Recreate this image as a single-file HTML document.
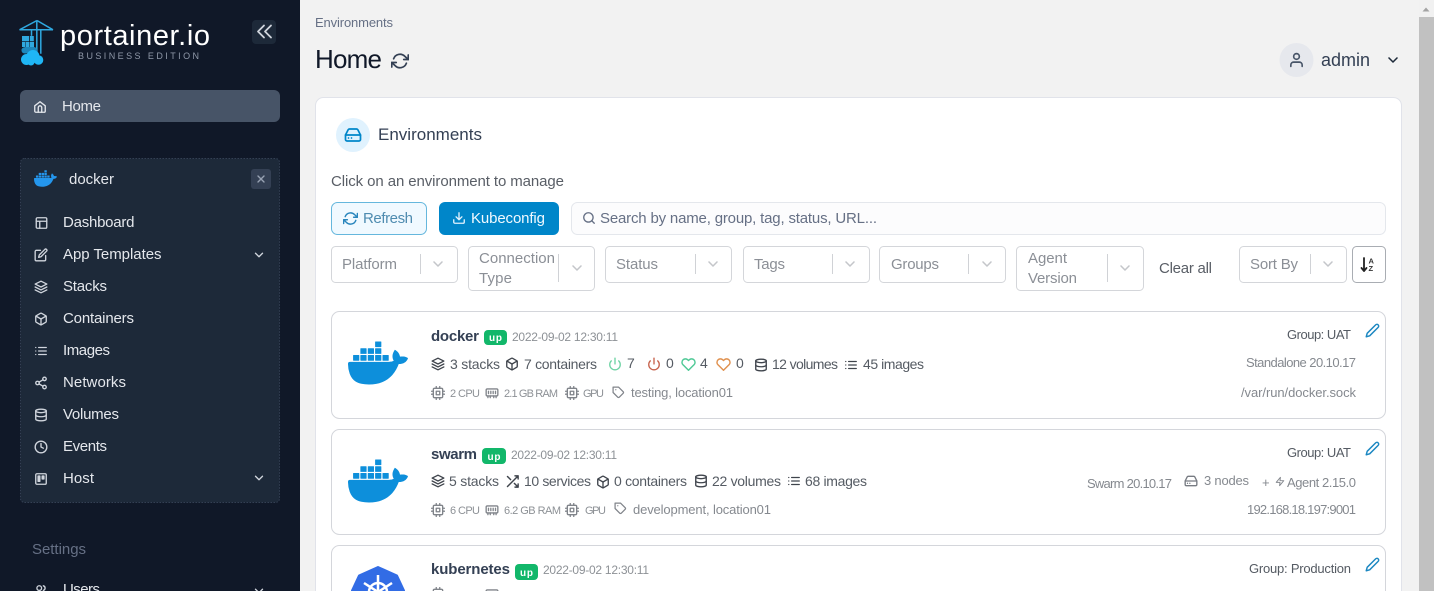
<!DOCTYPE html>
<html lang="en">
<head>
<meta charset="utf-8">
<title>Portainer Home</title>
<style>
html,body{margin:0;padding:0;width:1434px;height:591px;overflow:hidden;background:#f2f2f2}
svg{display:block}
text{font-family:"Liberation Sans",Arial,sans-serif;white-space:pre}
.ic{fill:none;stroke:currentColor;stroke-width:2.3;stroke-linecap:round;stroke-linejoin:round}
.nav{fill:#e4e7ec;font-size:15px}
.f{fill:#8b8f96;font-size:15px}
.s{fill:#555b63;font-size:14px}
.d{fill:#8d9196;font-size:12px}
.x{fill:#8d9196;font-size:11px}
.g{fill:#85898f;font-size:13px}
.b{fill:#344054;font-size:15px;font-weight:bold}
.u{fill:#fff;font-size:10px;font-weight:bold}
</style>
</head>
<body>
<svg xmlns="http://www.w3.org/2000/svg" width="1434" height="591" viewBox="0 0 1434 591">
<defs>
<symbol id="home" viewBox="0 0 24 24"><g class="ic"><path d="M3 10l9-7 9 7v9a2 2 0 0 1-2 2H5a2 2 0 0 1-2-2z"/><path d="M9 21v-8a3 3 0 0 1 6 0v8"/></g></symbol>
<symbol id="layout" viewBox="0 0 24 24"><g class="ic"><rect x="3" y="3" width="18" height="18" rx="2"/><path d="M3 9h18M9 21V9"/></g></symbol>
<symbol id="edit" viewBox="0 0 24 24"><g class="ic"><path d="M11 4H4a2 2 0 0 0-2 2v14a2 2 0 0 0 2 2h14a2 2 0 0 0 2-2v-7"/><path d="M18.5 2.5a2.121 2.121 0 0 1 3 3L12 15l-4 1 1-4 9.500-9.500z"/></g></symbol>
<symbol id="layers" viewBox="0 0 24 24"><g class="ic"><path d="M12 2 2 7l10 5 10-5-10-5z"/><path d="M2 17l10 5 10-5"/><path d="M2 12l10 5 10-5"/></g></symbol>
<symbol id="box" viewBox="0 0 24 24"><g class="ic"><path d="M21 16V8a2 2 0 0 0-1-1.730l-7-4a2 2 0 0 0-2 0l-7 4A2 2 0 0 0 3 8v8a2 2 0 0 0 1 1.730l7 4a2 2 0 0 0 2 0l7-4A2 2 0 0 0 21 16z"/><path d="M3.270 6.960 12 12.010l8.730-5.050"/><path d="M12 22.080V12"/></g></symbol>
<symbol id="list" viewBox="0 0 24 24"><g class="ic"><path d="M8 6h13M8 12h13M8 18h13M3 6h.01M3 12h.01M3 18h.01"/></g></symbol>
<symbol id="share" viewBox="0 0 24 24"><g class="ic"><circle cx="18" cy="5" r="3"/><circle cx="6" cy="12" r="3"/><circle cx="18" cy="19" r="3"/><path d="M8.590 13.510l6.830 3.980M15.410 6.510l-6.820 3.980"/></g></symbol>
<symbol id="db" viewBox="0 0 24 24"><g class="ic"><ellipse cx="12" cy="5" rx="9" ry="3"/><path d="M21 12c0 1.660-4 3-9 3s-9-1.340-9-3"/><path d="M3 5v14c0 1.660 4 3 9 3s9-1.340 9-3V5"/></g></symbol>
<symbol id="clock" viewBox="0 0 24 24"><g class="ic"><circle cx="12" cy="12" r="10"/><path d="M12 6v6l4 2"/></g></symbol>
<symbol id="trello" viewBox="0 0 24 24"><g class="ic"><rect x="3" y="3" width="18" height="18" rx="2"/><rect x="7" y="7" width="3" height="9" fill="currentColor"/><rect x="14" y="7" width="3" height="5" fill="currentColor"/></g></symbol>
<symbol id="users" viewBox="0 0 24 24"><g class="ic"><path d="M17 21v-2a4 4 0 0 0-4-4H5a4 4 0 0 0-4 4v2"/><circle cx="9" cy="7" r="4"/><path d="M16 3.130a4 4 0 0 1 0 7.750"/></g></symbol>
<symbol id="chev" viewBox="0 0 24 24"><g class="ic"><path d="M6 9l6 6 6-6"/></g></symbol>
<symbol id="refresh" viewBox="0 0 24 24"><g class="ic"><path d="M23 4v6h-6M1 20v-6h6"/><path d="M3.510 9a9 9 0 0 1 14.850-3.360L23 10M1 14l4.640 4.360A9 9 0 0 0 20.490 15"/></g></symbol>
<symbol id="dl" viewBox="0 0 24 24"><g class="ic"><path d="M21 15v4a2 2 0 0 1-2 2H5a2 2 0 0 1-2-2v-4"/><path d="M7 10l5 5 5-5M12 15V3"/></g></symbol>
<symbol id="search" viewBox="0 0 24 24"><g class="ic"><circle cx="11" cy="11" r="8"/><path d="M21 21l-4.350-4.350"/></g></symbol>
<symbol id="user" viewBox="0 0 24 24"><g class="ic"><path d="M20 21v-2a4 4 0 0 0-4-4H8a4 4 0 0 0-4 4v2"/><circle cx="12" cy="7" r="4"/></g></symbol>
<symbol id="hdd" viewBox="0 0 24 24"><g class="ic"><path d="M22 12H2"/><path d="M5.450 5.110 2 12v6a2 2 0 0 0 2 2h16a2 2 0 0 0 2-2v-6l-3.450-6.890A2 2 0 0 0 16.760 4H7.240a2 2 0 0 0-1.790 1.110z"/><path d="M6 16h.01M10 16h.01"/></g></symbol>
<symbol id="power" viewBox="0 0 24 24"><g class="ic"><path d="M18.360 6.640a9 9 0 1 1-12.730 0"/><path d="M12 2v10"/></g></symbol>
<symbol id="heart" viewBox="0 0 24 24"><g class="ic"><path d="M20.840 4.610a5.500 5.500 0 0 0-7.780 0L12 5.670l-1.060-1.060a5.500 5.500 0 0 0-7.780 7.780l1.060 1.060L12 21.230l7.780-7.780 1.060-1.060a5.500 5.500 0 0 0 0-7.780z"/></g></symbol>
<symbol id="cpu" viewBox="0 0 24 24"><g class="ic"><rect x="4" y="4" width="16" height="16" rx="2"/><rect x="9" y="9" width="6" height="6"/><path d="M9 1v3M15 1v3M9 20v3M15 20v3M20 9h3M20 14h3M1 9h3M1 14h3"/></g></symbol>
<symbol id="ram" viewBox="0 0 24 24"><g class="ic"><rect x="2" y="5" width="20" height="12" rx="2"/><path d="M6 9v4M10 9v4M14 9v4M18 9v4M5 17v3M9 17v3M15 17v3M19 17v3"/></g></symbol>
<symbol id="tag" viewBox="0 0 24 24"><g class="ic"><path d="M20.590 13.410l-7.170 7.170a2 2 0 0 1-2.830 0L2 12V2h10l8.590 8.590a2 2 0 0 1 0 2.820z"/><path d="M7 7h.01"/></g></symbol>
<symbol id="pencil" viewBox="0 0 24 24"><g class="ic"><path d="M17 3a2.830 2.830 0 1 1 4 4L7.500 20.500 2 22l1.500-5.500L17 3z"/></g></symbol>
<symbol id="shuffle" viewBox="0 0 24 24"><g class="ic"><path d="M16 3h5v5M4 20 21 3M21 16v5h-5M15 15l6 6M4 4l5 5"/></g></symbol>
<symbol id="zap" viewBox="0 0 24 24"><g class="ic"><path d="M13 2 3 14h9l-1 8 10-12h-9l1-8z"/></g></symbol>
<symbol id="whale" viewBox="0 0 24 24"><path fill="currentColor" d="M13.983 11.078h2.119a.186.186 0 00.186-.185V9.006a.186.186 0 00-.186-.186h-2.119a.185.185 0 00-.185.185v1.888c0 .102.083.185.185.185m-2.954-5.43h2.118a.186.186 0 00.186-.186V3.574a.186.186 0 00-.186-.185h-2.118a.185.185 0 00-.185.185v1.888c0 .102.082.185.185.186m0 2.716h2.118a.187.187 0 00.186-.186V6.29a.186.186 0 00-.186-.185h-2.118a.185.185 0 00-.185.185v1.887c0 .102.082.185.185.186m-2.93 0h2.12a.186.186 0 00.184-.186V6.29a.185.185 0 00-.185-.185H8.1a.185.185 0 00-.185.185v1.887c0 .102.083.185.185.186m-2.964 0h2.119a.186.186 0 00.185-.186V6.29a.185.185 0 00-.185-.185H5.136a.186.186 0 00-.186.185v1.887c0 .102.084.185.186.186m5.893 2.715h2.118a.186.186 0 00.186-.185V9.006a.186.186 0 00-.186-.186h-2.118a.185.185 0 00-.185.185v1.888c0 .102.082.185.185.185m-2.93 0h2.12a.185.185 0 00.184-.185V9.006a.185.185 0 00-.184-.186h-2.12a.185.185 0 00-.184.185v1.888c0 .102.083.185.185.185m-2.964 0h2.119a.185.185 0 00.185-.185V9.006a.185.185 0 00-.184-.186h-2.12a.186.186 0 00-.186.186v1.887c0 .102.084.185.186.185m-2.92 0h2.12a.185.185 0 00.184-.185V9.006a.185.185 0 00-.184-.186h-2.12a.185.185 0 00-.184.185v1.888c0 .102.082.185.185.185M23.763 9.89c-.065-.051-.672-.51-1.954-.51-.338.001-.676.03-1.01.087-.248-1.7-1.653-2.53-1.716-2.566l-.344-.199-.226.327c-.284.438-.49.922-.612 1.43-.23.97-.09 1.882.403 2.661-.595.332-1.55.413-1.744.42H.751a.751.751 0 00-.75.748 11.376 11.376 0 00.692 4.062c.545 1.428 1.355 2.48 2.41 3.124 1.18.723 3.1 1.137 5.275 1.137.983.003 1.963-.086 2.93-.266a12.248 12.248 0 003.823-1.389c.98-.567 1.86-1.288 2.61-2.136 1.252-1.418 1.998-2.997 2.553-4.4h.221c1.372 0 2.215-.549 2.68-1.009.309-.293.55-.65.707-1.046l.098-.288Z"/></symbol>
</defs>

<!-- page -->
<rect width="1434" height="591" fill="#f2f2f2"/>

<!-- sidebar -->
<rect width="300" height="591" fill="#101828"/>
<g fill="none" stroke="#2fa8e0" stroke-width="1.500">
<path d="M19.500 29.800h33.500M37 20.500 19.500 29.800M37 20.500l16 9.300"/>
<path d="M36.800 20.500v33M40.800 29.800v24"/>
<path d="M31.500 29.800v6"/>
</g>
<g fill="#2fa8e0">
<rect x="22" y="36" width="7" height="5.300"/><rect x="29.800" y="36" width="4" height="5.300"/>
<rect x="22" y="42" width="3.500" height="5"/><rect x="26" y="42" width="3.500" height="5"/><rect x="30" y="42" width="4" height="5"/>
</g>
<path d="M21.500 50c0-2 2.500-3 5-3h7c4 0 5 5 1.500 6.500h-10c-2.500 0-3.500-1.500-3.500-3.500z" fill="#1d87bd"/>
<g fill="#1fb6f5">
<circle cx="26.500" cy="59.500" r="5.500"/><circle cx="33" cy="56.500" r="6.500"/><circle cx="38.500" cy="60" r="4.800"/><circle cx="31" cy="62" r="3.500"/>
</g>
<text x="60" y="45" font-size="29" fill="#ffffff" textLength="150">portainer.io</text>
<text x="78" y="59" font-size="9" fill="#8f98a8" textLength="121">BUSINESS EDITION</text>
<rect x="252" y="20" width="24" height="24" rx="4" fill="#1d2939"/>
<path d="M264 26l-6 6 6 6M271 26l-6 6 6 6" fill="none" stroke="#d0d5dd" stroke-width="1.800" stroke-linecap="round" stroke-linejoin="round" transform="translate(0 -.500)"/>

<rect x="20" y="90" width="260" height="32" rx="6" fill="#475467"/>
<use href="#home" x="33" y="100" width="14" height="14" color="#e4e7ec"/>
<text x="62" y="111" class="nav" textLength="39">Home</text>

<rect x="20.500" y="158.500" width="259" height="344" rx="4" fill="#1d2939" stroke="#344054" stroke-dasharray="1.500 1.500"/>
<use href="#whale" x="34" y="167" width="23" height="23" color="#2496ed"/>
<text x="69" y="184" class="nav" textLength="45">docker</text>
<rect x="251" y="169" width="20" height="20" rx="3" fill="#344054"/>
<path d="M258 176l6 6M264 176l-6 6" stroke="#98a2b3" stroke-width="1.400" stroke-linecap="round"/>

<g color="#d0d5dd">
<use href="#layout" x="34.500" y="216" width="14" height="14"/>
<use href="#edit" x="34" y="248" width="14" height="14"/>
<use href="#layers" x="34" y="280" width="14" height="14"/>
<use href="#box" x="34" y="312" width="14" height="14"/>
<use href="#list" x="34" y="344" width="14" height="14"/>
<use href="#share" x="34" y="376" width="14" height="14"/>
<use href="#db" x="34" y="408" width="14" height="14"/>
<use href="#clock" x="34" y="440" width="14" height="14"/>
<use href="#trello" x="34" y="472" width="14" height="14"/>
<use href="#users" x="34" y="584" width="14" height="14"/>
<use href="#chev" x="252" y="248" width="14" height="14"/>
<use href="#chev" x="252" y="471" width="14" height="14"/>
<use href="#chev" x="252" y="584" width="14" height="14"/>
</g>
<text x="63" y="227" class="nav" textLength="71.500">Dashboard</text>
<text x="63" y="259" class="nav" textLength="98.500">App Templates</text>
<text x="63" y="291" class="nav" textLength="44">Stacks</text>
<text x="63" y="323" class="nav" textLength="71">Containers</text>
<text x="63" y="355" class="nav" textLength="47">Images</text>
<text x="63" y="387" class="nav" textLength="63">Networks</text>
<text x="63" y="419" class="nav" textLength="56">Volumes</text>
<text x="63" y="451" class="nav" textLength="44">Events</text>
<text x="63" y="483" class="nav" textLength="31">Host</text>
<text x="32" y="554" font-size="15" fill="#667085" textLength="54">Settings</text>
<text x="63" y="594" class="nav" textLength="37">Users</text>

<!-- header -->
<text x="315" y="27" font-size="13" fill="#667085" textLength="78">Environments</text>
<text x="315" y="68" font-size="26" fill="#101828" textLength="67">Home</text>
<use href="#refresh" x="391" y="52" width="18" height="18" color="#344054"/>
<circle cx="1296.500" cy="60" r="17" fill="#e6e8ed"/>
<use href="#user" x="1288" y="51.500" width="17" height="17" color="#475467"/>
<text x="1321" y="66" font-size="18" fill="#344054" textLength="49">admin</text>
<use href="#chev" x="1385" y="52" width="16" height="16" color="#1d2939"/>

<!-- panel -->
<rect x="315.500" y="97.500" width="1086" height="560" rx="8" fill="#fff" stroke="#e1e3ea"/>
<circle cx="353" cy="135" r="17" fill="#e0f2fe"/>
<use href="#hdd" x="344" y="126" width="18" height="18" color="#0086c9"/>
<text x="378" y="140" font-size="17" fill="#344054" textLength="104">Environments</text>
<text x="331" y="186" font-size="15" fill="#595e66" textLength="233">Click on an environment to manage</text>

<rect x="331.500" y="202.500" width="95" height="32" rx="6" fill="#f0f9ff" stroke="#65b7dd"/>
<use href="#refresh" x="343" y="211" width="15" height="15" color="#2a86bd"/>
<text x="363" y="223" font-size="15" fill="#4f8cb0" textLength="50">Refresh</text>
<rect x="439" y="202" width="120" height="33" rx="6" fill="#0086c9"/>
<use href="#dl" x="452" y="211" width="14" height="14" color="#e0f2fe"/>
<text x="471" y="223" font-size="15" fill="#f0f9ff" textLength="74">Kubeconfig</text>
<rect x="571.500" y="202.500" width="814" height="32" rx="6" fill="#fcfcfd" stroke="#e4e7ec"/>
<use href="#search" x="582" y="211" width="14" height="14" color="#667085"/>
<text x="600" y="223" font-size="15" fill="#667085" textLength="277">Search by name, group, tag, status, URL...</text>

<!-- filters -->
<g fill="#fff" stroke="#d4d6da">
<rect x="331.500" y="246.500" width="126" height="36" rx="4"/>
<rect x="468.500" y="246.500" width="126" height="44" rx="4"/>
<rect x="605.500" y="246.500" width="126" height="36" rx="4"/>
<rect x="743.500" y="246.500" width="126" height="36" rx="4"/>
<rect x="879.500" y="246.500" width="126" height="36" rx="4"/>
<rect x="1016.500" y="246.500" width="127" height="44" rx="4"/>
<rect x="1239.500" y="246.500" width="107" height="36" rx="4"/>
</g>
<rect x="1352.500" y="246.500" width="33" height="36" rx="4" fill="#fff" stroke="#a9adb3"/>
<g stroke="#d0d2d6">
<path d="M420.500 254v20M558.500 254v28M695.500 254v20M832.500 254v20M968.500 254v20M1107.500 254v28M1310.500 254v20"/>
</g>
<g color="#c4c6ca">
<use href="#chev" x="430" y="256" width="16" height="16"/>
<use href="#chev" x="569" y="260" width="16" height="16"/>
<use href="#chev" x="705" y="256" width="16" height="16"/>
<use href="#chev" x="842" y="256" width="16" height="16"/>
<use href="#chev" x="979" y="256" width="16" height="16"/>
<use href="#chev" x="1117" y="260" width="16" height="16"/>
<use href="#chev" x="1320" y="256" width="16" height="16"/>
</g>
<text x="342" y="269" class="f" textLength="55">Platform</text>
<text x="479" y="263" class="f" textLength="76">Connection</text>
<text x="479" y="283" class="f" textLength="33">Type</text>
<text x="616" y="269" class="f" textLength="42">Status</text>
<text x="754" y="269" class="f" textLength="31">Tags</text>
<text x="891" y="269" class="f" textLength="48">Groups</text>
<text x="1028" y="263" class="f" textLength="39">Agent</text>
<text x="1028" y="283" class="f" textLength="49">Version</text>
<text x="1159" y="273" font-size="15" fill="#595e66" textLength="53">Clear all</text>
<text x="1250" y="269" class="f" textLength="48">Sort By</text>
<path d="M1364 258v12.500M1361.500 268l2.500 3 2.500-3" fill="none" stroke="#222" stroke-width="1.800" stroke-linecap="round" stroke-linejoin="round"/>
<text x="1368.500" y="263.500" font-size="7.500" font-weight="bold" fill="#333">A</text>
<text x="1368.500" y="271" font-size="7.500" font-weight="bold" fill="#333">Z</text>

<!-- docker card -->
<rect x="331.500" y="311.500" width="1054" height="107" rx="8" fill="#fff" stroke="#d4d6db"/>
<use href="#whale" x="348" y="333" width="60" height="60" color="#0d8fdb"/>
<text x="431" y="341" class="b" textLength="48">docker</text>
<rect x="484" y="330" width="23" height="15" rx="4" fill="#12b76a"/>
<text x="489" y="341" class="u" textLength="13">up</text>
<text x="512" y="341" class="d" textLength="106">2022-09-02 12:30:11</text>
<g color="#3f444c">
<use href="#layers" x="431" y="357" width="14" height="14"/>
<use href="#box" x="505" y="357" width="14" height="14"/>
<use href="#db" x="754" y="358" width="14" height="14"/>
<use href="#list" x="844" y="358" width="14" height="14"/>
</g>
<use href="#power" x="608" y="357" width="14" height="14" color="#6fd3a4"/>
<use href="#power" x="647" y="357" width="14" height="14" color="#c7634d"/>
<use href="#heart" x="681" y="357" width="15" height="15" color="#4fc996"/>
<use href="#heart" x="716" y="357" width="15" height="15" color="#e0914f"/>
<text x="450" y="369" class="s" textLength="50">3 stacks</text>
<text x="524" y="369" class="s" textLength="73">7 containers</text>
<text x="627" y="368" class="s">7</text>
<text x="666" y="368" class="s">0</text>
<text x="700" y="368" class="s">4</text>
<text x="736" y="368" class="s">0</text>
<text x="772" y="369" class="s" textLength="66">12 volumes</text>
<text x="863" y="369" class="s" textLength="61">45 images</text>
<g color="#80848a">
<use href="#cpu" x="431" y="386" width="14" height="14"/>
<use href="#ram" x="485" y="386" width="14" height="14"/>
<use href="#cpu" x="565" y="386" width="14" height="14"/>
<use href="#tag" x="612" y="386" width="13" height="13"/>
</g>
<text x="450" y="397" class="x" textLength="30">2 CPU</text>
<text x="504" y="397" class="x" textLength="54">2.1 GB RAM</text>
<text x="583" y="397" class="x" textLength="21">GPU</text>
<text x="631" y="397" class="g" textLength="102">testing, location01</text>
<text x="1287" y="339" font-size="13" fill="#555b63" textLength="64">Group: UAT</text>
<use href="#pencil" x="1365" y="323" width="15" height="15" color="#1b87c1"/>
<text x="1246" y="367" class="g" textLength="110">Standalone 20.10.17</text>
<text x="1241" y="397" class="g" textLength="115">/var/run/docker.sock</text>

<!-- swarm card -->
<rect x="331.500" y="429.500" width="1054" height="105" rx="8" fill="#fff" stroke="#d4d6db"/>
<use href="#whale" x="348" y="451" width="60" height="60" color="#0d8fdb"/>
<text x="431" y="459" class="b" textLength="46">swarm</text>
<rect x="482" y="448" width="24" height="16" rx="4" fill="#12b76a"/>
<text x="487.500" y="460" class="u" textLength="13">up</text>
<text x="511" y="459" class="d" textLength="106">2022-09-02 12:30:11</text>
<g color="#3f444c">
<use href="#layers" x="431" y="474" width="14" height="14"/>
<use href="#shuffle" x="505" y="474" width="15" height="15"/>
<use href="#box" x="596" y="475" width="14" height="14"/>
<use href="#db" x="694" y="474" width="14" height="14"/>
<use href="#list" x="787" y="474" width="14" height="14"/>
</g>
<text x="449" y="486" class="s" textLength="50">5 stacks</text>
<text x="524" y="486" class="s" textLength="67">10 services</text>
<text x="614" y="486" class="s" textLength="73">0 containers</text>
<text x="712" y="486" class="s" textLength="69">22 volumes</text>
<text x="805" y="486" class="s" textLength="62">68 images</text>
<g color="#80848a">
<use href="#cpu" x="431" y="503" width="14" height="14"/>
<use href="#ram" x="485" y="503" width="14" height="14"/>
<use href="#cpu" x="565" y="503" width="14" height="14"/>
<use href="#tag" x="614" y="502" width="13" height="13"/>
</g>
<text x="450" y="514" class="x" textLength="30">6 CPU</text>
<text x="504" y="514" class="x" textLength="57">6.2 GB RAM</text>
<text x="585" y="514" class="x" textLength="21">GPU</text>
<text x="633" y="514" class="g" textLength="138">development, location01</text>
<text x="1287" y="457" font-size="13" fill="#555b63" textLength="64">Group: UAT</text>
<use href="#pencil" x="1365" y="441" width="15" height="15" color="#1b87c1"/>
<text x="1087" y="488" class="g" textLength="85">Swarm 20.10.17</text>
<use href="#hdd" x="1184" y="474" width="14" height="14" color="#777b82"/>
<text x="1204" y="485" class="g" textLength="45">3 nodes</text>
<text x="1262" y="487" class="g">+</text>
<use href="#zap" x="1275" y="476" width="10" height="11" color="#85898f"/>
<text x="1287" y="487" class="g" textLength="69">Agent 2.15.0</text>
<text x="1247" y="514" class="g" textLength="109">192.168.18.197:9001</text>

<!-- kubernetes card -->
<rect x="331.500" y="545.500" width="1054" height="100" rx="8" fill="#fff" stroke="#d4d6db"/>
<path d="M378 567l19 8.500 7 15v10h-52v-10l7-15z" fill="#326ce5" stroke="#326ce5" stroke-width="2" stroke-linejoin="round"/>
<g fill="none" stroke="#fff" stroke-width="2.500">
<circle cx="378" cy="592" r="9"/>
<path d="M378 575v26M364 583l28 18M392 583l-28 18"/>
</g>
<text x="431" y="574" class="b" textLength="79">kubernetes</text>
<rect x="515" y="564" width="23" height="16" rx="4" fill="#12b76a"/>
<text x="520" y="576" class="u" textLength="13">up</text>
<text x="543" y="574" class="d" textLength="106">2022-09-02 12:30:11</text>
<text x="1249" y="573" font-size="13" fill="#555b63" textLength="102">Group: Production</text>
<use href="#pencil" x="1365" y="557" width="15" height="15" color="#1b87c1"/>
<g color="#80848a">
<use href="#cpu" x="431" y="587" width="14" height="14"/>
<use href="#ram" x="485" y="587" width="14" height="14"/>
</g>

<!-- scrollbar -->
<rect x="1419" y="0" width="15" height="591" fill="#f1f1f1"/>
<rect x="1419" y="17" width="15" height="574" fill="#c1c1c1"/>
<path d="M1422.500 11.500h7l-3.500-4z" fill="#a3a3a3"/>
</svg>
</body>
</html>
